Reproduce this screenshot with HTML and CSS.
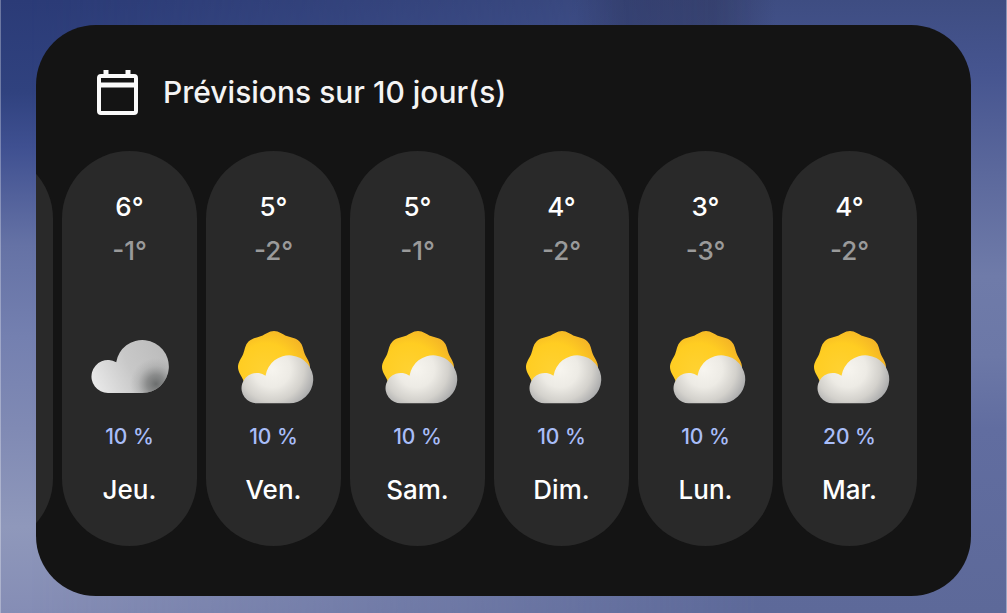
FILE: index.html
```html
<!DOCTYPE html>
<html lang="fr">
<head>
  <meta charset="UTF-8" />
  <meta name="viewport" content="width=device-width, initial-scale=1.0" />
  <title>Prévisions météo</title>
  <link rel="stylesheet" href="styles.css">
</head>
<body>

  <!-- shared weather icons -->
  <svg class="icon-defs" aria-hidden="true">
    <defs>
      <linearGradient id="cloud-grey" x1="0" y1="0.7" x2="1" y2="0.4">
        <stop offset="0" stop-color="#e8e8e8" />
        <stop offset="0.5" stop-color="#c8c8c8" />
        <stop offset="1" stop-color="#bcbcbc" />
      </linearGradient>
      <radialGradient id="cloud-grey-shade" gradientUnits="userSpaceOnUse" cx="66" cy="57" r="26">
        <stop offset="0" stop-color="#626565" stop-opacity="0.9" />
        <stop offset="0.35" stop-color="#6c6e6e" stop-opacity="0.65" />
        <stop offset="0.7" stop-color="#7c7e7e" stop-opacity="0.2" />
        <stop offset="1" stop-color="#8c8c8c" stop-opacity="0" />
      </radialGradient>
      <radialGradient id="sun-fill" gradientUnits="userSpaceOnUse" cx="-8" cy="4" r="46">
        <stop offset="0" stop-color="#ffd232" />
        <stop offset="0.6" stop-color="#ffcd22" />
        <stop offset="1" stop-color="#f3b226" />
      </radialGradient>
      <radialGradient id="cloud-white" gradientUnits="userSpaceOnUse" cx="38" cy="42" r="46">
        <stop offset="0" stop-color="#f7f5ef" />
        <stop offset="0.4" stop-color="#edebe5" />
        <stop offset="0.7" stop-color="#d3d1cc" />
        <stop offset="1" stop-color="#a3a4a6" />
      </radialGradient>
    </defs>
    <symbol id="icon-cloudy" viewBox="0 0 80 80">
      <path fill="url(#cloud-grey)" d="M18 66A16.5 16.5 0 1 1 26.2 35.2A26.5 26.5 0 1 1 52 66Z" />
      <path fill="url(#cloud-grey-shade)" d="M18 66A16.5 16.5 0 1 1 26.2 35.2A26.5 26.5 0 1 1 52 66Z" />
    </symbol>
    <symbol id="icon-partly" viewBox="0 0 80 80">
      <path fill="url(#sun-fill)" transform="translate(40 40)" d="M0-36C5-36 8.6-32.6 12.8-30.9C17-29.2 22-29 25.5-25.5C29-22 29.2-17 30.9-12.8C32.6-8.6 36-5 36 0C36 5 32.6 8.6 30.9 12.8C29.2 17 29 22 25.5 25.5C22 29 17 29.2 12.8 30.9C8.6 32.6 5 36 0 36C-5 36-8.6 32.6-12.8 30.9C-17 29.2-22 29-25.5 25.5C-29 22-29.2 17-30.9 12.8C-32.6 8.6-36 5-36 0C-36-5-32.6-8.6-30.9-12.8C-29.2-17-29-22-25.5-25.5C-22-29-17-29.2-12.8-30.9C-8.6-32.6-5-36 0-36Z" />
      <path fill="url(#cloud-white)" d="M23 76.3A15.2 15.2 0 1 1 31.5 48.7A24 24 0 1 1 55 76.3Z" />
    </symbol>
  </svg>

  <main class="forecast-card">
    <header class="forecast-header">
      <svg class="calendar-icon" viewBox="0 0 44 48" aria-hidden="true">
        <rect x="3" y="8" width="37" height="37" rx="2" fill="none" stroke="#fafafa" stroke-width="4" />
        <path d="M2 17H41" stroke="#fafafa" stroke-width="5" />
        <path d="M10 2V8M32 2V8" stroke="#fafafa" stroke-width="5" />
      </svg>
      <h1>Prévisions sur 10 jour(s)</h1>
    </header>

    <ul class="day-list">
      <li class="day"></li>
      <li class="day">
        <span class="high">6°</span>
        <span class="low">-1°</span>
        <svg class="weather-icon" role="img" aria-label="Nuageux"><use href="#icon-cloudy" /></svg>
        <span class="rain">10 %</span>
        <span class="name">Jeu.</span>
      </li>
      <li class="day">
        <span class="high">5°</span>
        <span class="low">-2°</span>
        <svg class="weather-icon" role="img" aria-label="Éclaircies"><use href="#icon-partly" /></svg>
        <span class="rain">10 %</span>
        <span class="name">Ven.</span>
      </li>
      <li class="day">
        <span class="high">5°</span>
        <span class="low">-1°</span>
        <svg class="weather-icon" role="img" aria-label="Éclaircies"><use href="#icon-partly" /></svg>
        <span class="rain">10 %</span>
        <span class="name">Sam.</span>
      </li>
      <li class="day">
        <span class="high">4°</span>
        <span class="low">-2°</span>
        <svg class="weather-icon" role="img" aria-label="Éclaircies"><use href="#icon-partly" /></svg>
        <span class="rain">10 %</span>
        <span class="name">Dim.</span>
      </li>
      <li class="day">
        <span class="high">3°</span>
        <span class="low">-3°</span>
        <svg class="weather-icon" role="img" aria-label="Éclaircies"><use href="#icon-partly" /></svg>
        <span class="rain">10 %</span>
        <span class="name">Lun.</span>
      </li>
      <li class="day">
        <span class="high">4°</span>
        <span class="low">-2°</span>
        <svg class="weather-icon" role="img" aria-label="Éclaircies"><use href="#icon-partly" /></svg>
        <span class="rain">20 %</span>
        <span class="name">Mar.</span>
      </li>
    </ul>
  </main>

</body>
</html>
```

FILE: styles.css
```css
* {
  box-sizing: border-box;
}

html {
  background: linear-gradient(to bottom, #2b3b77 0%, #30427f 15%, #3f5091 24%, #6572a5 40%, #7480b0 55%, #808ab4 70%, #8f98bb 86%, #858db5 100%);
}

body {
  margin: 0;
  min-height: 100vh;
  padding: 25px 35px 17px;
  border-left: 1px solid rgba(255, 255, 255, 0.3);
  border-right: 1px solid rgba(255, 255, 255, 0.4);
  font-family: Inter, 'Liberation Sans', sans-serif;
}

/* right side of the wallpaper, faded into the left one */
body::before {
  content: "";
  position: absolute;
  inset: 0;
  z-index: -1;
  background:
    linear-gradient(to right, transparent 57%, rgba(50, 58, 98, 0.6) 62%, rgba(50, 58, 98, 0.6) 71%, transparent 77%) top / 100% 30px no-repeat,
    linear-gradient(to bottom, #3e4d82 0%, #465590 12%, #5b689c 28%, #6f7ba9 45%, #6c78a7 58%, #616da0 70%, #5d6999 100%);
  -webkit-mask-image: linear-gradient(to right, transparent 3%, #000 75%);
  mask-image: linear-gradient(to right, transparent 3%, #000 75%);
}

.icon-defs {
  position: absolute;
  width: 0;
  height: 0;
}

.forecast-card {
  background-color: #141414;
  border-radius: 60px;
  padding: 43px 0 50px;
  overflow: hidden;
}

.forecast-header {
  display: flex;
  align-items: center;
  gap: 23px;
  padding: 0 60px;
  margin-bottom: 35px;
}

.calendar-icon {
  width: 44px;
  height: 48px;
  flex-shrink: 0;
}

h1 {
  margin: 0;
  font-size: 30px;
  font-weight: 500;
  line-height: 48px;
  color: #f4f4f4;
}

/* scrolled to the end, the first day is cut by the card edge */
.day-list {
  display: flex;
  justify-content: flex-end;
  gap: 9px;
  margin: 0;
  padding: 0 54px 0 0;
  list-style: none;
}

.day {
  flex: 0 0 135px;
  display: flex;
  flex-direction: column;
  align-items: center;
  padding: 34px 0;
  border-radius: 68px;
  background-color: #292929;
}

.high,
.low,
.name {
  font-size: 26px;
  font-weight: 500;
  line-height: 44px;
  color: #ffffff;
}

.low {
  color: #9a9a9a;
}

.weather-icon {
  width: 80px;
  height: 80px;
  margin: 54px 0 15px;
}

.rain {
  font-size: 21px;
  font-weight: 500;
  line-height: 30px;
  color: #a8bdf8;
}

.name {
  margin-top: 16px;
}
```
